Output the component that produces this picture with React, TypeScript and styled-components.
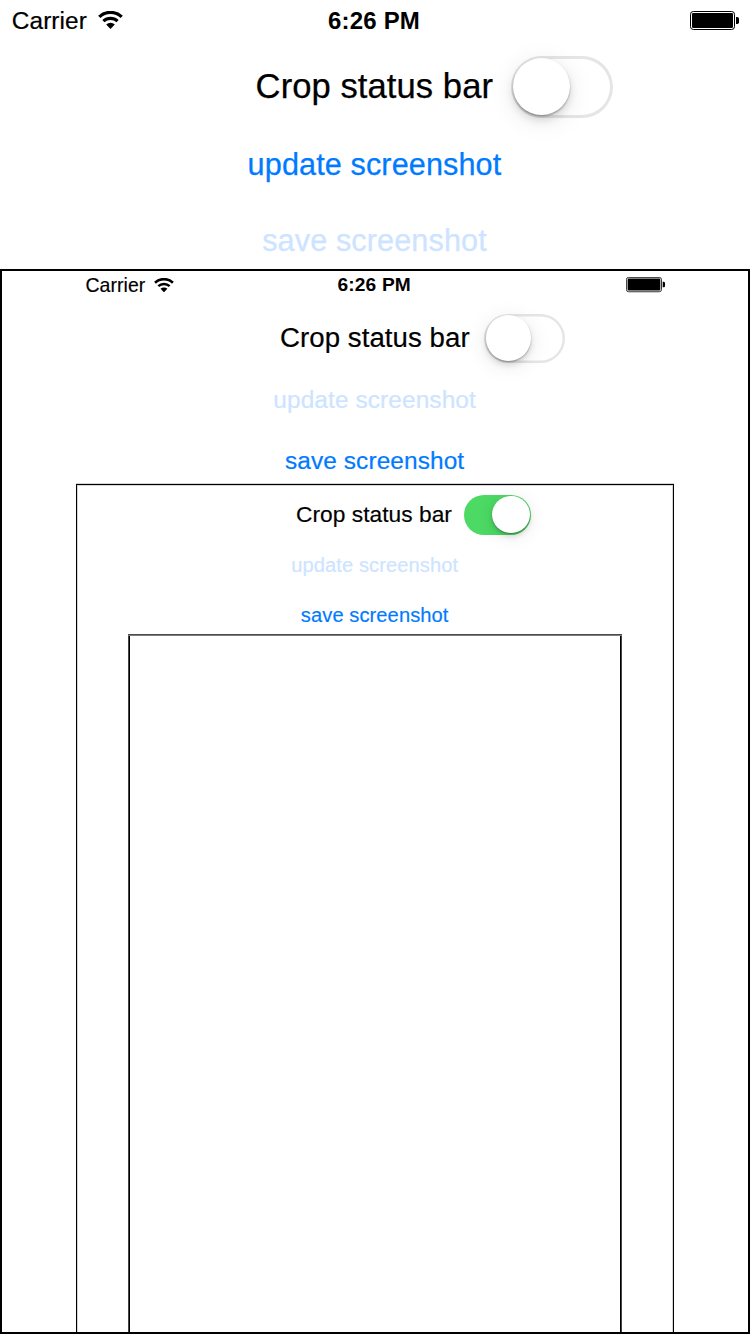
import React from 'react';
import styled, { createGlobalStyle, css } from 'styled-components';

const GlobalStyle = createGlobalStyle`
  body {
    margin: 0;
    background: #fff;
    overflow: hidden;
    font-family: 'Liberation Sans', Arial, sans-serif;
  }
  * { box-sizing: border-box; }
`;

// Lengths are written for the full-size screen and follow its --s scale.
const u = (n: number) => `calc(var(--s) * ${n}px)`;

const Screen = styled.section<{ $scale: number; $width: number }>`
  --s: ${p => p.$scale};
  width: ${p => p.$width}px;
  flex: none;
  display: flex;
  flex-direction: column;
  background: #fff;
`;

const Header = styled.header<{ $height: number }>`
  height: ${p => p.$height}px;
  flex: none;
`;

const StatusBar = styled.div`
  height: ${u(40)};
  padding: 0 ${u(11)};
  display: grid;
  grid-template-columns: 1fr auto 1fr;
  align-items: center;
  font-size: ${u(24)};
  line-height: ${u(40)};
  white-space: nowrap;
`;

const Carrier = styled.div`
  display: flex;
  align-items: center;
  padding-left: ${u(0.8)};
  gap: ${u(11)};
  svg { width: ${u(25)}; height: ${u(18)}; display: block; }
`;

const CarrierName = styled.span`
  padding-top: ${u(1.6)};
  line-height: ${u(38.4)};
  font-size: ${u(24.4)};
  letter-spacing: ${u(0.09)};
  -webkit-text-stroke: ${u(0.2)} currentColor;
`;

const Clock = styled.time`
  padding: ${u(1.6)} ${u(2)} 0 0;
  line-height: ${u(38.4)};
  font-weight: 700;
  letter-spacing: ${u(0.2)};
`;

const Battery = styled.div`
  justify-self: end;
  svg { width: ${u(49)}; height: ${u(19)}; display: block; }
`;

const Controls = styled.div`
  padding-top: ${u(16)};
  display: flex;
  flex-direction: column;
  align-items: center;
  gap: ${u(16)};
`;

const SwitchRow = styled.label`
  align-self: flex-start;
  display: flex;
  align-items: center;
  margin-left: ${u(255.6)};
  height: ${u(62)};
`;

const SwitchLabel = styled.span`
  width: ${u(255.4)};
  font-size: ${u(34.6)};
  line-height: ${u(60)};
  padding-bottom: ${u(2)};
  letter-spacing: ${u(0.07)};
  -webkit-text-stroke: ${u(0.25)} currentColor;
  white-space: nowrap;
`;

const Track = styled.span<{ $on: boolean }>`
  display: flex;
  align-items: center;
  justify-content: ${p => (p.$on ? 'flex-end' : 'flex-start')};
  width: ${u(102)};
  height: ${u(62)};
  padding: 0 ${u(2)} ${u(0.6)};
  border-radius: ${u(31)};
  background: ${p => (p.$on ? '#4cd964' : '#fff')};
  box-shadow: ${p => (p.$on ? 'none' : css`inset 0 0 0 ${u(3)} #e5e5e5`)};
`;

const Knob = styled.span`
  width: ${u(57)};
  height: ${u(57)};
  border-radius: 50%;
  background: #fff;
  box-shadow: 0 ${u(1.5)} ${u(2)} rgba(0, 0, 0, 0.28), 0 ${u(5)} ${u(8)} rgba(0, 0, 0, 0.12),
    0 ${u(5)} ${u(26)} rgba(0, 0, 0, 0.1);
`;

const TextButton = styled.button`
  height: ${u(60)};
  padding: 0 ${u(1)} 0 0;
  border: 0;
  background: none;
  color: #007aff;
  font-family: inherit;
  font-size: ${u(30.6)};
  line-height: ${u(60)};
  letter-spacing: ${u(0.12)};
  -webkit-text-stroke: ${u(0.25)} currentColor;
  white-space: nowrap;
  &:disabled { color: #cce4ff; }
`;

const Frame = styled.div<{ $height: number; $edge: string }>`
  position: relative;
  height: ${p => p.$height}px;
  display: flex;
  justify-content: center;
  align-items: flex-start;
  &::after {
    content: '';
    position: absolute;
    inset: 0;
    pointer-events: none;
    box-shadow: ${p => p.$edge};
  }
`;

const Wifi = () => (
  <svg viewBox="0 0 25 18" fill="none" stroke="#000">
    <path d="M1.3 5.9A16.2 16.2 0 0 1 23.7 5.9" strokeWidth="3.3" />
    <path d="M5.4 10.2A10.4 10.4 0 0 1 19.6 10.2" strokeWidth="3.1" />
    <path d="M12.5 18L8.2 13.5A6.2 6.2 0 0 1 16.8 13.5Z" fill="#000" stroke="none" />
  </svg>
);

const BatteryIcon = () => (
  <svg viewBox="0 0 49 19">
    <rect x=".5" y=".5" width="44" height="18" rx="2.8" fill="#fff" stroke="#000" />
    <rect x="2" y="2" width="41" height="15" rx="1.3" />
    <path d="M46 6h1.2q1.8 0 1.8 1.8v3.4q0 1.8-1.8 1.8H46z" />
  </svg>
);

interface Level {
  scale: number;
  width: number;
  header: number;
  frame: number;
  edge: string;
  cropped: boolean;
  canUpdate: boolean;
}

const levels: Level[] = [
  {
    scale: 1, width: 750, header: 269, frame: 1065, cropped: false, canUpdate: true,
    edge: 'inset 0 0 0 2px #000',
  },
  {
    scale: 0.7984, width: 598, header: 215, frame: 850, cropped: false, canUpdate: false,
    edge: 'inset 0 0 0 1px #000, inset 0 0 0 2px #d4d4d4, 0 -1px 0 #d4d4d4',
  },
  {
    scale: 0.6572, width: 494, header: 150, frame: 700, cropped: true, canUpdate: false,
    edge: 'inset 0 1px 0 #4c4c4c, inset 0 2px 0 #7c7c7c, inset 1px 0 0 #444, inset -1px 0 0 #444, inset 0 0 0 2px #000',
  },
];

function CaptureScreen({ depth }: { depth: number }) {
  const level = levels[depth];
  return (
    <Screen $scale={level.scale} $width={level.width}>
      <Header $height={level.header}>
        {!level.cropped && (
          <StatusBar>
            <Carrier><CarrierName>Carrier</CarrierName><Wifi /></Carrier>
            <Clock>6:26 PM</Clock>
            <Battery><BatteryIcon /></Battery>
          </StatusBar>
        )}
        <Controls>
          <SwitchRow>
            <SwitchLabel>Crop status bar</SwitchLabel>
            <Track $on={level.cropped}><Knob /></Track>
          </SwitchRow>
          <TextButton disabled={!level.canUpdate}>update screenshot</TextButton>
          <TextButton disabled={level.canUpdate}>save screenshot</TextButton>
        </Controls>
      </Header>
      <Frame $height={level.frame} $edge={level.edge}>
        {depth + 1 < levels.length && <CaptureScreen depth={depth + 1} />}
      </Frame>
    </Screen>
  );
}

const Viewport = styled.main`
  width: 750px;
  height: 1334px;
  overflow: hidden;
`;

export default function App() {
  return (
    <Viewport>
      <GlobalStyle />
      <CaptureScreen depth={0} />
    </Viewport>
  );
}
